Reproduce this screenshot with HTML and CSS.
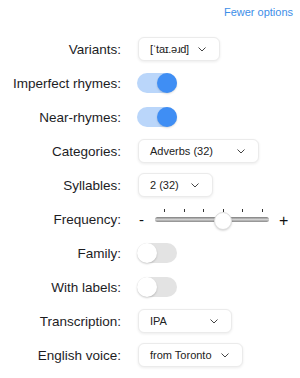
FILE: index.html
```html
<!DOCTYPE html>
<html lang="en">
<head>
    <meta charset="UTF-8">
    <meta name="viewport" content="width=device-width, initial-scale=1.0">
    <title>Options</title>
    <link rel="stylesheet" href="styles.css">
</head>

<body>
    <div id="options">
        <div class="top">
            <a href="#" class="fewer">Fewer options</a>
        </div>
        <div class="grid">
            <label>Variants:</label>
            <div class="select w-variants">
                <span class="ipa">[ˈtaɪ.əɹd]</span>
                <svg width="8" height="5" viewBox="0 0 8 5"><path d="M0.5 0.5 L4 4 L7.5 0.5" fill="none" stroke="#444" stroke-width="1"/></svg>
            </div>

            <label>Imperfect rhymes:</label>
            <div class="toggle on"><span class="knob"></span></div>

            <label>Near-rhymes:</label>
            <div class="toggle on"><span class="knob"></span></div>

            <label>Categories:</label>
            <div class="select w-categories">
                <span>Adverbs (32)</span>
                <svg width="8" height="5" viewBox="0 0 8 5"><path d="M0.5 0.5 L4 4 L7.5 0.5" fill="none" stroke="#444" stroke-width="1"/></svg>
            </div>

            <label>Syllables:</label>
            <div class="select w-syllables">
                <span>2 (32)</span>
                <svg width="8" height="5" viewBox="0 0 8 5"><path d="M0.5 0.5 L4 4 L7.5 0.5" fill="none" stroke="#444" stroke-width="1"/></svg>
            </div>

            <label>Frequency:</label>
            <div class="freq">
                <span class="minus">-</span>
                <div class="slider">
                    <div class="ticks">
                        <i></i><i></i><i></i><i></i><i></i><i></i>
                    </div>
                    <div class="track"></div>
                    <div class="thumb"></div>
                </div>
                <span class="plus">+</span>
            </div>

            <label>Family:</label>
            <div class="toggle"><span class="knob"></span></div>

            <label>With labels:</label>
            <div class="toggle"><span class="knob"></span></div>

            <label>Transcription:</label>
            <div class="select w-transcription">
                <span>IPA</span>
                <svg width="8" height="5" viewBox="0 0 8 5"><path d="M0.5 0.5 L4 4 L7.5 0.5" fill="none" stroke="#444" stroke-width="1"/></svg>
            </div>

            <label>English voice:</label>
            <div class="select w-voice">
                <span>from Toronto</span>
                <svg width="8" height="5" viewBox="0 0 8 5"><path d="M0.5 0.5 L4 4 L7.5 0.5" fill="none" stroke="#444" stroke-width="1"/></svg>
            </div>
        </div>
    </div>
</body>
</html>
```

FILE: styles.css
```css
body {
    margin: 0;
    font-family: 'Liberation Sans', Arial, sans-serif;
    background-color: #fff;
    color: #1d1d1f;
}

#options {
    width: 300px;
}

.top {
    display: flex;
    justify-content: flex-end;
    height: 32px;
    padding-top: 6px;
    box-sizing: border-box;
}

.fewer {
    font-size: 11px;
    color: #3c8ee8;
    text-decoration: none;
    margin-right: 7px;
}

.grid {
    display: grid;
    grid-template-columns: 122px auto;
    grid-auto-rows: 34px;
    column-gap: 15px;
    align-items: center;
}

.grid label {
    text-align: right;
    font-size: 13.5px;
    padding-right: 1px;
}

.select {
    display: flex;
    align-items: center;
    justify-content: space-between;
    height: 24px;
    box-sizing: border-box;
    padding: 0 13px 0 11px;
    margin-left: 1px;
    background-color: #fff;
    border: 1px solid #ebebeb;
    border-radius: 6px;
    box-shadow: 0 1px 3px rgba(0, 0, 0, 0.08);
    font-size: 11px;
    color: #222;
}

.select svg {
    flex-shrink: 0;
}

.select .ipa {
    letter-spacing: -0.3px;
}

.w-variants { width: 82px; }
.w-categories { width: 121px; }
.w-syllables { width: 75px; }
.w-transcription { width: 94px; }
.w-voice { width: 105px; }

.toggle {
    position: relative;
    width: 40px;
    height: 20px;
    border-radius: 10px;
    background-color: #e3e3e3;
    margin-top: -1px;
}

.toggle .knob {
    position: absolute;
    left: 0;
    top: 0;
    width: 20px;
    height: 20px;
    border-radius: 50%;
    background-color: #fff;
    box-shadow: 0 1px 2px rgba(0, 0, 0, 0.2);
}

.toggle.on {
    background-color: #bad6fa;
}

.toggle.on .knob {
    left: 20px;
    background-color: #3f8ef4;
    box-shadow: 0 1px 2px rgba(0, 0, 0, 0.15);
}

.freq {
    display: flex;
    align-items: center;
    height: 34px;
    font-size: 15px;
    color: #111;
}

.minus {
    width: 18px;
    padding-left: 2px;
    box-sizing: border-box;
}

.plus {
    margin-left: 10px;
    font-size: 16px;
    margin-top: 3px;
}

.slider {
    position: relative;
    width: 114px;
    height: 34px;
}

.ticks {
    position: absolute;
    left: 9px;
    top: 7px;
    width: 99px;
    display: flex;
    justify-content: space-between;
}

.ticks i {
    display: block;
    width: 1px;
    height: 3px;
    background-color: #333;
}

.track {
    position: absolute;
    left: 0;
    right: 0;
    top: 15px;
    height: 5px;
    border-radius: 3px;
    background: linear-gradient(#7c7c7c, #d0d0d0 50%, #8a8a8a);
}

.thumb {
    position: absolute;
    left: 59px;
    top: 10px;
    width: 16px;
    height: 16px;
    border-radius: 50%;
    background-color: #fff;
    border: 1px solid #dcdcdc;
    box-shadow: 0 1px 2px rgba(0, 0, 0, 0.15);
}
```
